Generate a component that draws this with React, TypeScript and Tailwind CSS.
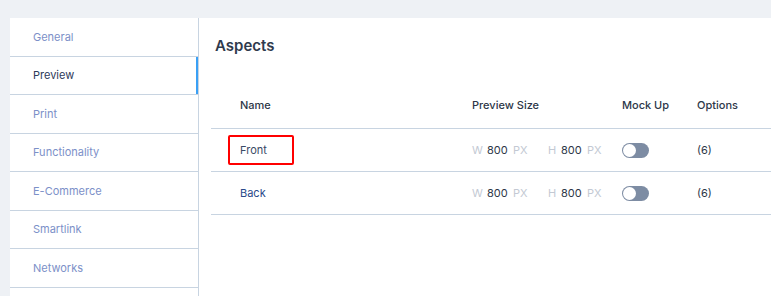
import React from "react";

const navItems = ["General", "Preview", "Print", "Functionality", "E-Commerce", "Smartlink", "Networks", ""];

function Toggle() {
  return (
    <div className="w-[27px] h-[15px] rounded-full bg-[#7d8ca3] flex items-center px-[1px]">
      <div className="w-[13px] h-[13px] rounded-full bg-white" />
    </div>
  );
}

function Row({ name, boxed }: { name: string; boxed?: boolean }) {
  return (
    <div className="flex items-center h-[43px] border-b border-[#c8d4e1]">
      <div className="w-[261px] pl-[17px] flex items-center">
        {boxed ? (
          <div className="w-[66px] h-[30px] border-2 border-[#f00] rounded-[2px] flex items-center pl-[10px] text-[#3a4a66]">
            {name}
          </div>
        ) : (
          <div className="pl-[12px] text-[#2a4a8a]">{name}</div>
        )}
      </div>
      <div className="w-[150px] flex items-center text-[11px]">
        <span className="text-[#c3c9d3] w-[15px]">W</span>
        <span className="text-[#2d3748] w-[26px]">800</span>
        <span className="text-[#c3c9d3] w-[35px]">PX</span>
        <span className="text-[#c3c9d3] w-[13px]">H</span>
        <span className="text-[#2d3748] w-[26px]">800</span>
        <span className="text-[#c3c9d3]">PX</span>
      </div>
      <div className="w-[75px]">
        <Toggle />
      </div>
      <div className="text-[#2d3748]">(6)</div>
    </div>
  );
}

export default function App() {
  return (
    <div
      className="w-[771px] h-[296px] bg-[#eef1f5] pt-[18px] pl-[10px] flex overflow-hidden text-[11px]"
      style={{ fontFamily: "Inter, 'Noto Sans', sans-serif" }}
    >
      <div className="w-[189px] bg-white border-r border-[#c8d4e1] flex flex-col">
        {navItems.map((item, i) => (
          <div
            key={i}
            className={`h-[38.5px] shrink-0 border-b border-[#c8d4e1] flex items-center pl-[23px] relative ${
              i === 1 ? "text-[#2d3a5a]" : "text-[#7c90c8]"
            }`}
          >
            {item}
            {i === 1 && <div className="absolute right-0 top-0 bottom-0 w-[2px] bg-[#3aa0f5]" />}
          </div>
        ))}
      </div>
      <div className="flex-1 bg-white pl-[12px]">
        <div className="pl-[4px] pt-[17px] h-[64px] text-[15px] font-semibold text-[#2f3a4d]">Aspects</div>
        <div className="flex items-center h-[47px] border-b border-[#c8d4e1] font-medium text-[#2d3748]">
          <div className="w-[261px] pl-[29px]">Name</div>
          <div className="w-[150px]">Preview Size</div>
          <div className="w-[75px]">Mock Up</div>
          <div>Options</div>
        </div>
        <Row name="Front" boxed />
        <Row name="Back" />
      </div>
    </div>
  );
}
